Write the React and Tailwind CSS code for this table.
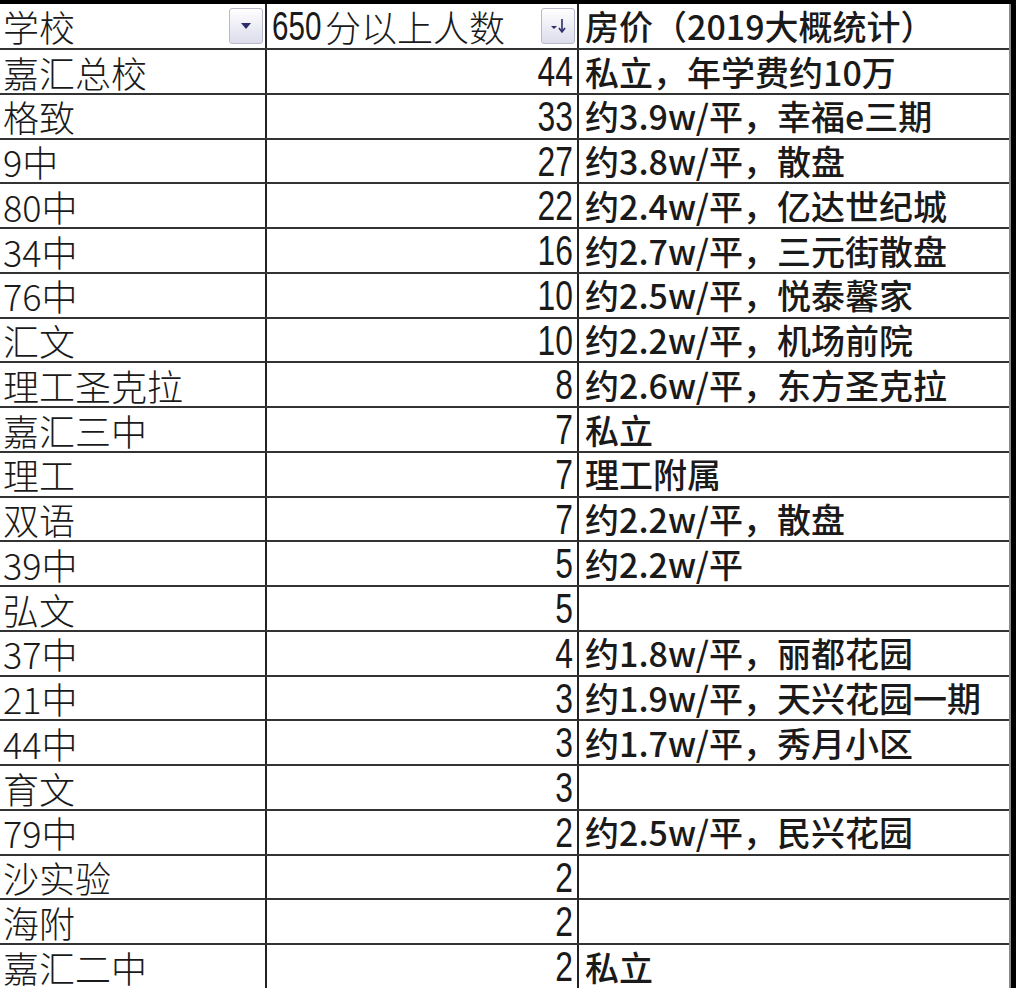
const rows = [
  ['嘉汇总校', 44, '私立，年学费约10万'],
  ['格致', 33, '约3.9w/平，幸福e三期'],
  ['9中', 27, '约3.8w/平，散盘'],
  ['80中', 22, '约2.4w/平，亿达世纪城'],
  ['34中', 16, '约2.7w/平，三元街散盘'],
  ['76中', 10, '约2.5w/平，悦泰馨家'],
  ['汇文', 10, '约2.2w/平，机场前院'],
  ['理工圣克拉', 8, '约2.6w/平，东方圣克拉'],
  ['嘉汇三中', 7, '私立'],
  ['理工', 7, '理工附属'],
  ['双语', 7, '约2.2w/平，散盘'],
  ['39中', 5, '约2.2w/平'],
  ['弘文', 5, ''],
  ['37中', 4, '约1.8w/平，丽都花园'],
  ['21中', 3, '约1.9w/平，天兴花园一期'],
  ['44中', 3, '约1.7w/平，秀月小区'],
  ['育文', 3, ''],
  ['79中', 2, '约2.5w/平，民兴花园'],
  ['沙实验', 2, ''],
  ['海附', 2, ''],
  ['嘉汇二中', 2, '私立'],
]

const cjk = { fontFamily: '"Noto Sans CJK SC", "Noto Sans", sans-serif' }
const num = { fontFamily: '"Liberation Sans", Arial, sans-serif' }

function FilterButton({ sort }) {
  return (
    <div className="flex h-[36px] w-[34px] shrink-0 items-center justify-center rounded-[3px] border border-[#b9b9cc] bg-gradient-to-b from-[#ffffff] to-[#dcdcec]">
      {sort ? (
        <svg width="22" height="22" viewBox="0 0 22 22">
          <path d="M4 11 L10 11 L7 14 Z" fill="#2c2c6a" />
          <path d="M15 4 L15 16" stroke="#2c2c6a" strokeWidth="1.6" />
          <path d="M12 13 L15 17 L18 13" stroke="#2c2c6a" strokeWidth="1.6" fill="none" />
        </svg>
      ) : (
        <svg width="16" height="16" viewBox="0 0 16 16">
          <path d="M3 5 L13 5 L8 11 Z" fill="#2c2c6a" />
        </svg>
      )}
    </div>
  )
}

export default function App() {
  return (
    <div className="h-[988px] w-[1016px] overflow-hidden bg-black pr-[5px] pt-[4px]">
      <div className="h-full w-[1011px] border-r-2 border-[#8a8a8a] bg-white text-[#1a1a1a]">
        <div className="grid h-[46px] grid-cols-[267px_312px_1fr] border-b-2 border-[#333]">
          <div className="flex items-center justify-between border-r-2 border-[#222] pl-[3px] pr-[2px]">
            <span className="text-[36px] font-light leading-none" style={cjk}>学校</span>
            <FilterButton />
          </div>
          <div className="flex items-center justify-between border-r-2 border-[#222] pl-[5px] pr-[2px]">
            <span className="flex items-center leading-none">
              <span className="inline-block w-[53px] origin-left scale-x-[0.74] text-[40px] font-light" style={num}>650</span>
              <span className="text-[36px] font-light" style={cjk}>分以上人数</span>
            </span>
            <FilterButton sort />
          </div>
          <div className="flex items-center pl-[6px]">
            <span className="text-[34px] font-medium leading-none" style={cjk}>房价（2019大概统计）</span>
          </div>
        </div>
        {rows.map(([school, count, price]) => (
          <div key={school} className="grid h-[44.75px] grid-cols-[267px_312px_1fr] border-b-2 border-[#333]">
            <div className="flex items-center border-r-2 border-[#222] pl-[3px]">
              <span className="text-[36px] font-light leading-none" style={cjk}>{school}</span>
            </div>
            <div className="flex items-center justify-end border-r-2 border-[#222] pr-[4px]">
              <span className="inline-block origin-right scale-x-[0.74] text-[43px] leading-none" style={num}>{count}</span>
            </div>
            <div className="flex items-center pl-[6px]">
              <span className="text-[34px] font-medium leading-none" style={cjk}>{price}</span>
            </div>
          </div>
        ))}
      </div>
    </div>
  )
}
